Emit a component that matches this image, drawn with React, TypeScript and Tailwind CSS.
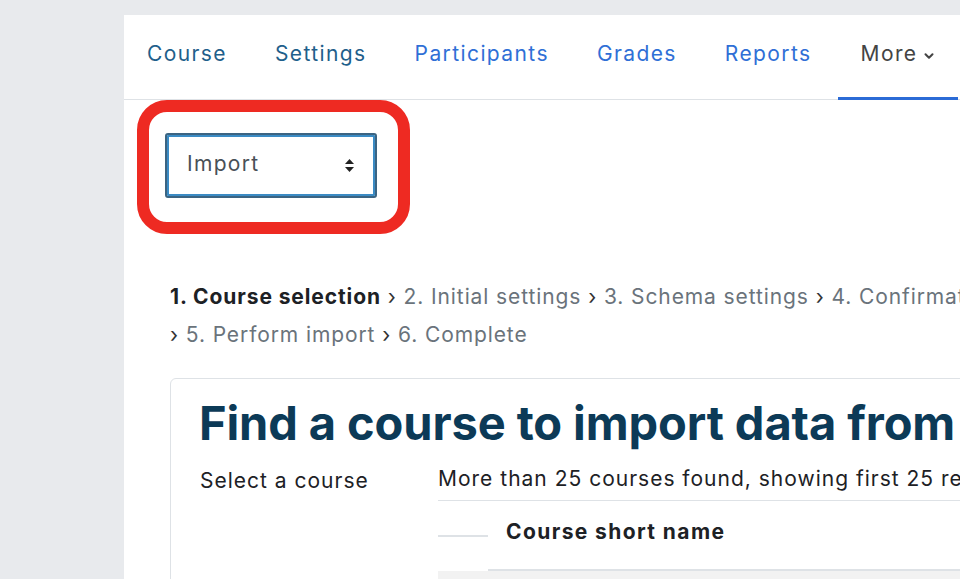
import { ChevronDown } from "lucide-react";

const tabs = [
  { label: "Course", cls: "text-[#1f5f8b]" },
  { label: "Settings", cls: "text-[#1f5f8b]" },
  { label: "Participants", cls: "text-[#2f6fd6]" },
  { label: "Grades", cls: "text-[#2f6fd6]" },
  { label: "Reports", cls: "text-[#2f6fd6]" },
];

const steps = [
  "2. Initial settings",
  "3. Schema settings",
  "4. Confirmation and review",
  "5. Perform import",
  "6. Complete",
];

export default function App() {
  return (
    <div
      className="flex h-[579px] w-[960px] overflow-hidden bg-[#e8eaed] pl-[124px] pt-[15px]"
      style={{ fontFamily: "Inter, 'Open Sans', sans-serif" }}
    >
      <div className="flex min-w-0 flex-1 flex-col bg-white">
        {/* secondary navigation */}
        <nav className="flex h-[85px] shrink-0 items-stretch border-b border-[#dee2e6]">
          {tabs.map((t, i) => (
            <a
              key={t.label}
              className={`flex items-center pb-[7px] text-[21px] tracking-[1.4px] ${
                i === 0 ? "pl-[23px] pr-[24px]" : "px-[24px]"
              } ${t.cls}`}
            >
              {t.label}
            </a>
          ))}
          <a className="-mb-px ml-[2px] flex w-[120px] shrink-0 items-center gap-[4px] border-b-[3px] border-[#2b6bd6] pl-[23px] pt-[3px] pb-[7px] text-[21px] tracking-[1.4px] text-[#444]">
            More
            <ChevronDown className="mt-[4px] h-[14px] w-[14px]" strokeWidth={3.5} />
          </a>
        </nav>

        <div className="relative pl-[41px] pt-[33px]">
          {/* annotation around the action selector */}
          <div className="pointer-events-none absolute left-[13px] top-0 h-[134px] w-[273px] rounded-[30px] border-[12px] border-[#ee2a22]" />
          <div className="flex h-[65px] w-[212px] items-center justify-between rounded-[3px] border-2 border-[#3b6482] pl-[20px] pr-[20px] shadow-[inset_0_0_0_2px_#3b8bc4]">
            <span className="pb-[3px] text-[21px] tracking-[1.3px] text-[#495057]">Import</span>
            <svg width="11" height="15" viewBox="0 0 11 15" className="text-[#222]">
              <path d="M5.5 1 L10 6 H1 Z" fill="currentColor" />
              <path d="M5.5 14 L10 9 H1 Z" fill="currentColor" />
            </svg>
          </div>
        </div>

        <div className="pl-[46px] pt-[80px]">
          <div className="w-[1000px] text-[21px] leading-[38px] tracking-[0.9px] text-[#6a737b]">
            <span className="font-bold text-[#1d2125]">1. Course selection</span>
            {steps.map((s) => (
              <span key={s}>
                {" "}
                <span className="whitespace-nowrap">
                  <span className="text-[#333]">›</span> {s}
                </span>
              </span>
            ))}
          </div>

          <div className="mt-[24px] w-[1000px] rounded-[6px] border border-[#dee2e6] pl-[28px] pt-[14px]">
            <h2 className="whitespace-nowrap text-[47px] font-bold leading-[60px] tracking-[-0.1px] text-[#0c3a57]">
              Find a course to import data from
            </h2>
            <div className="mt-[12px] flex text-[21px] tracking-[1px] text-[#1d2125]">
              <div className="w-[239px] shrink-0 pl-px">Select a course</div>
              <div className="flex-1">
                <div className="whitespace-nowrap leading-[28px]">
                  More than 25 courses found, showing first 25 results
                </div>
                <div className="mt-[7px] flex border-t border-[#dee2e6]">
                  <div className="h-[36px] w-[50px] shrink-0 border-b-2 border-[#dee2e6]" />
                  <div className="flex h-[70px] flex-1 items-center border-b-2 border-[#dee2e6] pb-[6px] pl-[18px] font-bold tracking-[1.4px]">
                    Course short name
                  </div>
                </div>
                <div className="h-[40px] bg-[#f2f2f2]" />
              </div>
            </div>
          </div>
        </div>
      </div>
    </div>
  );
}
